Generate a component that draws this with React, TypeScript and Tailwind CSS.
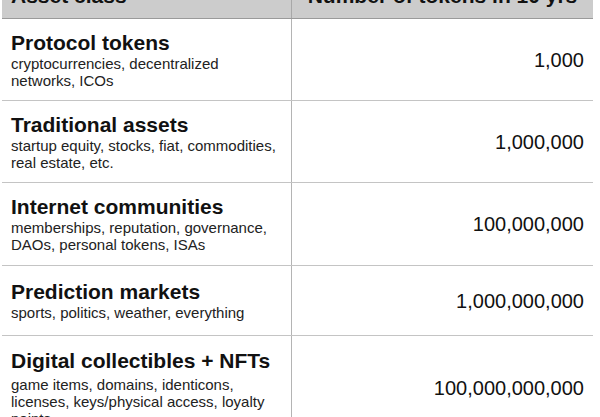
const rows = [
  {
    title: "Protocol tokens",
    lines: ["cryptocurrencies, decentralized", "networks, ICOs"],
    count: "1,000",
    h: "h-[82px]",
    gap: "",
  },
  {
    title: "Traditional assets",
    lines: ["startup equity, stocks, fiat, commodities,", "real estate, etc."],
    count: "1,000,000",
    h: "h-[82px]",
    gap: "",
  },
  {
    title: "Internet communities",
    lines: ["memberships, reputation, governance,", "DAOs, personal tokens, ISAs"],
    count: "100,000,000",
    h: "h-[83px]",
    gap: "",
  },
  {
    title: "Prediction markets",
    lines: ["sports, politics, weather, everything"],
    count: "1,000,000,000",
    h: "h-[70px]",
    gap: "",
  },
  {
    title: "Digital collectibles + NFTs",
    lines: ["game items, domains, identicons,", "licenses, keys/physical access, loyalty", "points"],
    count: "100,000,000,000",
    h: "h-[104px]",
    gap: "mt-[3px]",
  },
];

export default function App() {
  return (
    <div className="w-[600px] h-[417px] overflow-hidden bg-white font-[family-name:Liberation_Sans,Arial,sans-serif] text-[#111]">
      <div className="ml-[2px] w-[591px] -mt-[26px]">
        <div className="grid grid-cols-[289px_1fr] h-[45px] bg-[#cccccc] border-b border-[#9a9a9a]">
          <div className="flex items-center pl-[9px] text-[21px] leading-[24px] font-bold">
            Asset class
          </div>
          <div className="flex items-center justify-center border-l border-[#a8a8a8] text-[21px] leading-[24px] font-bold">
            Number of tokens in 10 yrs
          </div>
        </div>

        {rows.map((r) => (
          <div
            key={r.title}
            className={`grid grid-cols-[289px_1fr] border-b border-[#c4c4c4] ${r.h}`}
          >
            <div className="flex flex-col justify-center pl-[9px]">
              <div className="text-[21px] leading-[24px] font-bold text-[#111]">{r.title}</div>
              <div className={`text-[15px] leading-[17px] text-[#222] ${r.gap}`}>
                {r.lines.map((l, i) => (
                  <div key={i} className="whitespace-nowrap">{l}</div>
                ))}
              </div>
            </div>
            <div className="flex items-center justify-end pr-[9px] border-l border-[#b4b4b4] text-[20px] leading-[24px] text-[#111]">
              {r.count}
            </div>
          </div>
        ))}
      </div>
    </div>
  );
}
